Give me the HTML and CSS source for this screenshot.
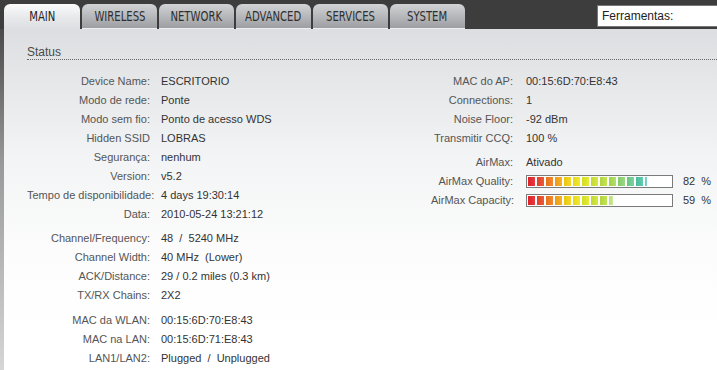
FILE: index.html
```html
<!DOCTYPE html>
<html lang="pt">
<head>
    <meta charset="UTF-8">
    <title>Main</title>
    <link rel="stylesheet" href="styles.css">
</head>
<body>
    <div class="header">
        <ul class="tabs">
            <li class="tab active"><span>MAIN</span></li>
            <li class="tab"><span>WIRELESS</span></li>
            <li class="tab"><span>NETWORK</span></li>
            <li class="tab"><span>ADVANCED</span></li>
            <li class="tab"><span>SERVICES</span></li>
            <li class="tab"><span>SYSTEM</span></li>
        </ul>
        <select class="tools">
            <option>Ferramentas:</option>
        </select>
    </div>

    <div class="frame">
        <div class="panel">
            <h2 class="section-title">Status</h2>

            <div class="columns">
                <div class="col col-left">
                    <dl class="info">
                        <dt>Device Name:</dt><dd>ESCRITORIO</dd>
                        <dt>Modo de rede:</dt><dd>Ponte</dd>
                        <dt>Modo sem fio:</dt><dd>Ponto de acesso WDS</dd>
                        <dt>Hidden SSID</dt><dd>LOBRAS</dd>
                        <dt>Segurança:</dt><dd>nenhum</dd>
                        <dt>Version:</dt><dd>v5.2</dd>
                        <dt>Tempo de disponibilidade:</dt><dd>4 days 19:30:14</dd>
                        <dt>Data:</dt><dd>2010-05-24 13:21:12</dd>
                    </dl>
                    <dl class="info group">
                        <dt>Channel/Frequency:</dt><dd>48 &nbsp;/ &nbsp;5240 MHz</dd>
                        <dt>Channel Width:</dt><dd>40 MHz &nbsp;(Lower)</dd>
                        <dt>ACK/Distance:</dt><dd>29 / 0.2 miles (0.3 km)</dd>
                        <dt>TX/RX Chains:</dt><dd>2X2</dd>
                    </dl>
                    <dl class="info group wide">
                        <dt>MAC da WLAN:</dt><dd>00:15:6D:70:E8:43</dd>
                        <dt>MAC na LAN:</dt><dd>00:15:6D:71:E8:43</dd>
                        <dt>LAN1/LAN2:</dt><dd>Plugged &nbsp;/ &nbsp;Unplugged</dd>
                    </dl>
                </div>

                <div class="col col-right">
                    <dl class="info">
                        <dt>MAC do AP:</dt><dd>00:15:6D:70:E8:43</dd>
                        <dt>Connections:</dt><dd>1</dd>
                        <dt>Noise Floor:</dt><dd>-92 dBm</dd>
                        <dt>Transmitir CCQ:</dt><dd>100 %</dd>
                    </dl>
                    <dl class="info group">
                        <dt>AirMax:</dt><dd>Ativado</dd>
                        <dt>AirMax Quality:</dt>
                        <dd class="meter-row">
                            <div class="meter" data-full="13" data-part="2"></div>
                            <span class="pct">82 &nbsp;%</span>
                        </dd>
                        <dt>AirMax Capacity:</dt>
                        <dd class="meter-row">
                            <div class="meter" data-full="9" data-part="4"></div>
                            <span class="pct">59 &nbsp;%</span>
                        </dd>
                    </dl>
                </div>
            </div>
        </div>
    </div>

    <script>
        // cores dos segmentos, do vermelho ao verde-azulado
        var colors = ['#e8232a', '#ec4626', '#f47a1a', '#f8a614', '#f6d210', '#f2e618',
                      '#e0ea22', '#cfe630', '#bce240', '#a8de52', '#8cd672', '#6ece8e',
                      '#50c6a6', '#36bcb6'];

        document.querySelectorAll('.meter').forEach(function(m) {
            var full = parseInt(m.dataset.full, 10);
            var part = parseInt(m.dataset.part, 10);
            for (var i = 0; i < full; i++) {
                var s = document.createElement('span');
                s.className = 'seg';
                s.style.backgroundColor = colors[i];
                m.appendChild(s);
            }
            if (part) {
                var p = document.createElement('span');
                p.className = 'seg part';
                p.style.backgroundColor = colors[full];
                p.style.width = part + 'px';
                m.appendChild(p);
            }
        });
    </script>
</body>
</html>
```

FILE: styles.css
```css
html, body {
    margin: 0;
    padding: 0;
    overflow: hidden;
}

body {
    background: #3d3d3d;
    font-family: "Liberation Sans", Arial, sans-serif;
    font-size: 11px;
    color: #333;
    height: 370px;
}

/* barra de abas */
.header {
    display: flex;
    align-items: flex-start;
    height: 29px;
    padding-left: 4px;
}

.tabs {
    display: flex;
    gap: 2px;
    list-style: none;
    margin: 4px 0 0 0;
    padding: 0;
}

.tab {
    width: 75px;
    height: 24px;
    line-height: 25px;
    text-align: center;
    font-family: "DejaVu Sans Condensed", "DejaVu Sans", sans-serif;
    font-stretch: condensed;
    font-size: 14px;
    color: #2e2e2e;
    border-radius: 6px 6px 0 0;
    background: linear-gradient(to bottom, #d2d3d5 0%, #b9bbbe 45%, #9c9ea1 100%);
    border-bottom: 1px solid #eceeef;
}

.tab span {
    display: inline-block;
    transform: scaleX(0.8);
}

.tab.active {
    width: 76px;
    height: 25px;
    border-bottom: none;
    color: #262626;
    background: linear-gradient(to bottom, #fbfbfc 0%, #e9eaec 50%, #dcdee1 100%);
}

.tools {
    appearance: none;
    -webkit-appearance: none;
    margin: 5px 0 0 auto;
    width: 120px;
    height: 22px;
    padding: 0 4px;
    border: 1px solid #777;
    border-right: none;
    border-radius: 0;
    background: #fff;
    font-family: "Liberation Sans", Arial, sans-serif;
    font-size: 12px;
    color: #222;
}

/* area principal */
.frame {
    height: 341px;
    padding-left: 4px;
    background: linear-gradient(to bottom, #4a4a4a 0%, #9a9a9a 40%, #d6d6d6 100%);
}

.panel {
    height: 341px;
    padding-left: 23px;
    background: linear-gradient(to bottom, #dcdee1 0px, #e3e5e7 40px, #f3f4f5 130px, #fcfcfc 220px, #fff 300px);
}

.section-title {
    margin: 0;
    padding-top: 16px;
    height: 14px;
    line-height: 14px;
    font-size: 12px;
    font-weight: normal;
    color: #4a4a4a;
    border-bottom: 1px dotted #666;
}

.columns {
    display: flex;
    padding-top: 12px;
}

.col-left {
    width: 404px;
}

.info {
    display: grid;
    grid-template-columns: 123px auto;
    column-gap: 11px;
    margin: 0;
    line-height: 19px;
}

.col-right .info {
    grid-template-columns: 82px auto;
    column-gap: 13px;
}

.info dt {
    text-align: right;
    color: #555;
    white-space: nowrap;
}

.info dd {
    margin: 0;
    color: #333;
    white-space: nowrap;
}

.info.group {
    margin-top: 5px;
}

.info.group.wide {
    margin-top: 6px;
}

/* medidores airmax */
.meter-row {
    display: flex;
    align-items: center;
}

.meter {
    display: flex;
    gap: 2px;
    width: 143px;
    height: 9px;
    padding: 1px;
    border: 1px solid #7a7a7a;
    background: #fff;
}

.seg {
    width: 7px;
    height: 9px;
    background-image: linear-gradient(to right, rgba(0, 0, 0, 0.06), rgba(255, 255, 255, 0.1));
}

.seg.part {
    opacity: 0.7;
}

.pct {
    margin-left: 10px;
    color: #333;
}
```
